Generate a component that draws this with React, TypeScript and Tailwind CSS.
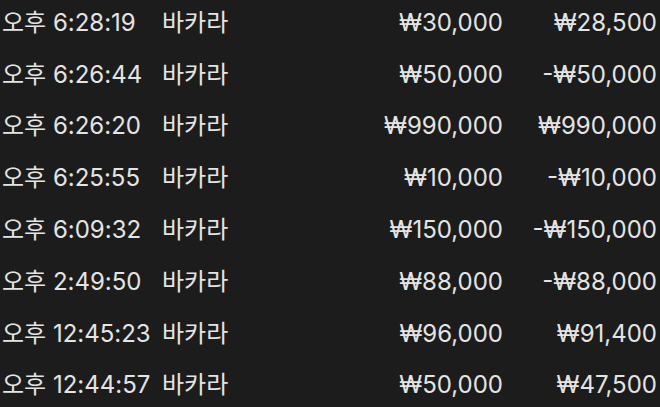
import React from "react";

const rows = [
  ["오후 6:28:19", "바카라", "₩30,000", "₩28,500"],
  ["오후 6:26:44", "바카라", "₩50,000", "-₩50,000"],
  ["오후 6:26:20", "바카라", "₩990,000", "₩990,000"],
  ["오후 6:25:55", "바카라", "₩10,000", "-₩10,000"],
  ["오후 6:09:32", "바카라", "₩150,000", "-₩150,000"],
  ["오후 2:49:50", "바카라", "₩88,000", "-₩88,000"],
  ["오후 12:45:23", "바카라", "₩96,000", "₩91,400"],
  ["오후 12:44:57", "바카라", "₩50,000", "₩47,500"],
];

export default function App() {
  return (
    <div
      className="w-[660px] h-[407px] overflow-hidden bg-[#1c1c1c] text-[#e4e4e4]"
      style={{ fontFamily: '"Inter", "Noto Sans CJK KR", sans-serif' }}
    >
      <div className="flex flex-col -mt-[3px]">
        {rows.map((r, i) => (
          <div key={i} className="flex items-center h-[51.8px] text-[24px] leading-none">
            <div className="w-[162px] pl-[2px] whitespace-nowrap">{r[0]}</div>
            <div className="w-[160px] whitespace-nowrap">{r[1]}</div>
            <div className="w-[181px] text-right whitespace-nowrap">{r[2]}</div>
            <div className="w-[154px] text-right whitespace-nowrap">{r[3]}</div>
          </div>
        ))}
      </div>
    </div>
  );
}
